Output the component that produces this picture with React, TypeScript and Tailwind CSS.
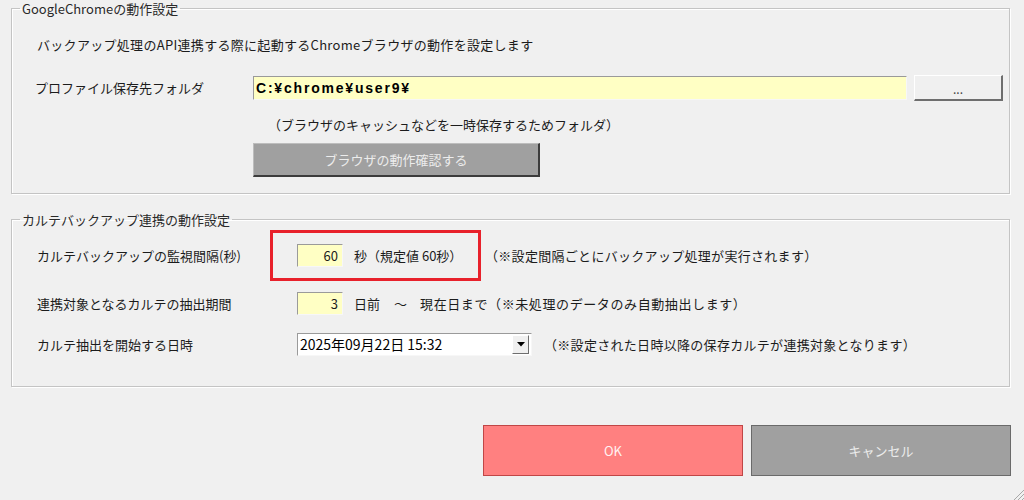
import React from "react";

const font = { fontFamily: '"Noto Sans CJK JP", "Noto Sans", sans-serif' };

const sunken =
  "border-t border-l border-t-[#9a9a9a] border-l-[#9a9a9a] border-b border-r border-b-[#f7f7f7] border-r-[#f7f7f7]";

const Group = ({ title, children, className }: { title: string; children: React.ReactNode; className?: string }) => (
  <fieldset className={`ml-[11px] w-[999px] border border-[#c4c4c4] shadow-[inset_1px_1px_0_#ffffff,1px_1px_0_#ffffff] ${className ?? ""}`}>
    <legend className="ml-[8px] px-[2px] leading-[17px]">
      <span className="text-[13px] font-normal text-[#2a2a2a]">{title}</span>
    </legend>
    {children}
  </fieldset>
);

export default function App() {
  return (
    <div className="w-[1024px] h-[500px] overflow-hidden bg-[#f0f0f0] text-[13px] text-[#1c1c1c]" style={font}>
      <Group title="GoogleChromeの動作設定" className="h-[194px]">
        <div className="pl-[25px] pt-[19px] leading-[18px] tracking-[0.3px]">
          バックアップ処理のAPI連携する際に起動するChromeブラウザの動作を設定します
        </div>
        <div className="mt-[21px] flex h-[26px] items-center">
          <div className="w-[241px] pl-[23px]">プロファイル保存先フォルダ</div>
          <div className={`h-[24px] w-[654px] bg-[#ffffc4] ${sunken} flex items-center pl-[2px]`}>
            <span className="text-[14px] font-bold tracking-[1.8px] text-black" style={{ fontFamily: '"Liberation Sans", Arial, sans-serif' }}>
              C:¥chrome¥user9¥
            </span>
          </div>
          <button className="ml-[7px] flex h-[26px] w-[89px] items-center justify-center border-t border-l border-t-white border-l-white border-r-2 border-b-2 border-r-[#6e6e6e] border-b-[#6e6e6e] bg-[#f0f0f0] pt-[2px] text-[12px] leading-none text-[#444]">
            ...
          </button>
        </div>
        <div className="mt-[15px] pl-[256px] leading-[18px]">
          （ブラウザのキャッシュなどを一時保存するためフォルダ）
        </div>
        <button className="ml-[241px] mt-[9px] flex h-[34px] w-[287px] items-center justify-center border-t border-l border-t-[#bdbdbd] border-l-[#bdbdbd] border-r-2 border-b-2 border-r-[#3c3c3c] border-b-[#3c3c3c] bg-[#a0a0a0] text-[13px] text-[#ececec]">
          ブラウザの動作確認する
        </button>
      </Group>

      <Group title="カルテバックアップ連携の動作設定" className="mt-[17px] h-[176px]">
        <div className="mt-[2px] flex h-[51px] items-center">
          <div className="w-[258px] pl-[25px]">カルテバックアップの監視間隔(秒)</div>
          <div className="flex h-[51px] w-[211px] items-center border-[3px] border-[#e8212b]">
            <div className={`ml-[24px] flex h-[23px] w-[46px] items-center justify-end bg-[#ffffc4] pr-[4px] ${sunken}`}>60</div>
            <div className="ml-[11px]">秒（規定値 60秒）</div>
          </div>
          <div className="ml-[4px] tracking-[0.3px]">（※設定間隔ごとにバックアップ処理が実行されます）</div>
        </div>
        <div className="mt-[11px] flex h-[23px] items-center">
          <div className="w-[285px] pl-[25px]">連携対象となるカルテの抽出期間</div>
          <div className={`flex h-[23px] w-[46px] items-center justify-end bg-[#ffffc4] pr-[4px] ${sunken}`}>3</div>
          <div className="ml-[11px]">日前</div>
          <div className="ml-[14px]">～</div>
          <div className="ml-[13px] tracking-[0.6px]">現在日まで（※未処理のデータのみ自動抽出します）</div>
        </div>
        <div className="mt-[18px] flex h-[23px] items-center">
          <div className="w-[285px] pl-[25px]">カルテ抽出を開始する日時</div>
          <div className={`flex h-[23px] w-[235px] items-center bg-white pl-[2px] ${sunken}`}>
            <span className="flex-1 text-[14px] text-black">2025年09月22日 15:32</span>
            <div className="mr-[2px] flex h-[19px] w-[17px] items-center justify-center border-t border-l border-t-white border-l-white border-r border-b border-r-[#6e6e6e] border-b-[#6e6e6e] bg-[#f0f0f0]">
              <svg width="8" height="5" viewBox="0 0 8 5">
                <path d="M0 0 H8 L4 4.5 Z" fill="#000" />
              </svg>
            </div>
          </div>
          <div className="ml-[12px] tracking-[0.3px]">（※設定された日時以降の保存カルテが連携対象となります）</div>
        </div>
      </Group>

      <div className="mt-[38px] flex justify-end gap-[8px] pr-[13px]">
        <button className="flex h-[51px] w-[260px] items-center justify-center border border-[#c04646] bg-[#ff8080] text-[13px] text-[#fff2f2]">
          OK
        </button>
        <button className="flex h-[51px] w-[260px] items-center justify-center border border-[#6a6a6a] bg-[#a0a0a0] text-[13px] text-[#ececec]">
          キャンセル
        </button>
      </div>
      <div className="mt-[13px] flex justify-end">
        <svg width="11" height="11" viewBox="0 0 11 11">
          <path d="M11 1 L1 11 M11 5 L5 11 M11 9 L9 11" stroke="#a8a8a8" strokeWidth="1" />
        </svg>
      </div>
    </div>
  );
}
